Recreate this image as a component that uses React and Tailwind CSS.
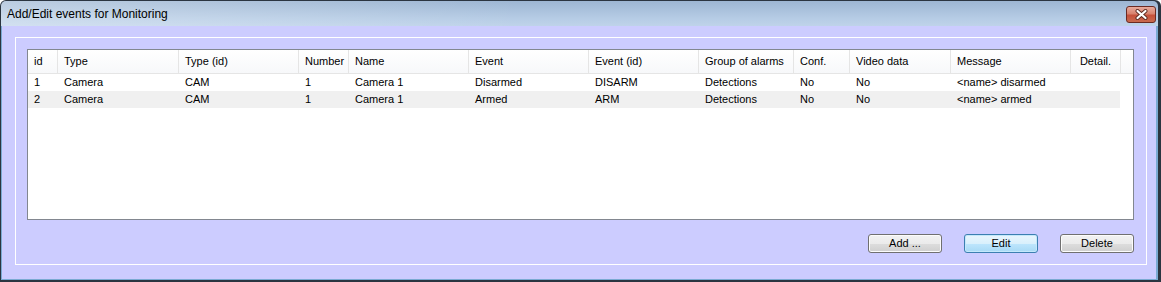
import React from 'react';

const columns = [
  { key: 'id', label: 'id', w: 'w-[30px]' },
  { key: 'type', label: 'Type', w: 'w-[121px]' },
  { key: 'typeId', label: 'Type (id)', w: 'w-[120px]' },
  { key: 'number', label: 'Number', w: 'w-[50px]' },
  { key: 'name', label: 'Name', w: 'w-[120px]' },
  { key: 'event', label: 'Event', w: 'w-[120px]' },
  { key: 'eventId', label: 'Event (id)', w: 'w-[110px]' },
  { key: 'group', label: 'Group of alarms', w: 'w-[95px]' },
  { key: 'conf', label: 'Conf.', w: 'w-[56px]' },
  { key: 'video', label: 'Video data', w: 'w-[101px]' },
  { key: 'message', label: 'Message', w: 'w-[120px]' },
  { key: 'detail', label: 'Detail.', w: 'w-[50px]', center: true },
];

const rows = [
  { id: '1', type: 'Camera', typeId: 'CAM', number: '1', name: 'Camera 1', event: 'Disarmed', eventId: 'DISARM', group: 'Detections', conf: 'No', video: 'No', message: '<name> disarmed', detail: '' },
  { id: '2', type: 'Camera', typeId: 'CAM', number: '1', name: 'Camera 1', event: 'Armed', eventId: 'ARM', group: 'Detections', conf: 'No', video: 'No', message: '<name> armed', detail: '' },
];

const CloseIcon = () => (
  <svg width="13" height="11" viewBox="0 0 13 11">
    <path d="M2.5 2 L10.5 9 M10.5 2 L2.5 9" stroke="#5a2a22" strokeWidth="4" strokeLinecap="round" />
    <path d="M2.5 2 L10.5 9 M10.5 2 L2.5 9" stroke="#ffffff" strokeWidth="2.2" strokeLinecap="round" />
  </svg>
);

const Button = ({ label, primary }) => (
  <button
    type="button"
    className={
      primary
        ? 'w-[74px] h-[19px] rounded-[3px] border border-[#3c7fb1] bg-[linear-gradient(to_bottom,#eaf6fd,#d9f0fc_50%,#bee6fd_51%,#a7d9f5)] shadow-[inset_0_0_0_1px_#c4e8fb] text-[11px] leading-none text-black'
        : 'w-[74px] h-[19px] rounded-[3px] border border-[#707070] bg-[linear-gradient(to_bottom,#f2f2f2,#ebebeb_50%,#dddddd_51%,#cfcfcf)] shadow-[inset_0_0_0_1px_#fcfcfc] text-[11px] leading-none text-black'
    }
  >
    {label}
  </button>
);

export default function App() {
  return (
    <div className="w-[1161px] h-[282px] bg-[#2b3541] pl-px pt-px pr-[3px] pb-[2px] rounded-t-[6px] font-['Liberation_Sans',Arial,sans-serif] overflow-hidden">
      <div className="h-full flex flex-col rounded-t-[5px] overflow-hidden">
        {/* title bar */}
        <div className="h-[25px] shrink-0 flex items-center justify-between pl-[6px] pr-[2px] bg-[linear-gradient(to_right,rgba(255,255,255,0.3),rgba(255,255,255,0)_45%),linear-gradient(to_bottom,#9db6d3,#b6cce5_70%,#bfd3ea)]">
          <span className="text-[12px] text-black">Add/Edit events for Monitoring</span>
          <div className="w-[30px] h-[17px] mt-[1px] rounded-[3px] border border-[#6b2a22] bg-[linear-gradient(to_bottom,#e7ab9c,#d8826e_45%,#c5503a_55%,#c86a4f)] flex items-center justify-center">
            <CloseIcon />
          </div>
        </div>

        {/* client area */}
        <div className="flex-1 bg-[#ccccff] border-l border-r-2 border-b border-[#7aaad2] pl-[13px] pt-[11px]">
          <div className="w-[1132px] h-[228px] border border-white flex flex-col pl-[11px] pt-[11px]">
            {/* list view */}
            <div className="w-[1107px] h-[171px] border border-[#828790] bg-white text-[11px] text-black">
              <div className="flex h-[24px] border-b border-[#e5e5e5] bg-[linear-gradient(to_bottom,#ffffff,#f7f8fa)]">
                {columns.map((c) => (
                  <div
                    key={c.key}
                    className={`${c.w} shrink-0 h-full border-r border-[#e5e5e5] flex items-center ${c.center ? 'justify-center' : 'pl-[6px]'}`}
                  >
                    {c.label}
                  </div>
                ))}
              </div>
              {rows.map((r, i) => (
                <div key={r.id} className={`flex h-[17px] w-[1092px] ${i % 2 === 1 ? 'bg-[#f0f0f0]' : 'bg-white'}`}>
                  {columns.map((c) => (
                    <div
                      key={c.key}
                      className={`${c.w} shrink-0 h-full flex items-center whitespace-nowrap ${c.center ? 'justify-center' : 'pl-[6px]'}`}
                    >
                      {r[c.key]}
                    </div>
                  ))}
                </div>
              ))}
            </div>

            {/* buttons */}
            <div className="w-[1107px] mt-[14px] flex justify-end gap-[22px]">
              <Button label="Add ..." />
              <Button label="Edit" primary />
              <Button label="Delete" />
            </div>
          </div>
        </div>
      </div>
    </div>
  );
}
